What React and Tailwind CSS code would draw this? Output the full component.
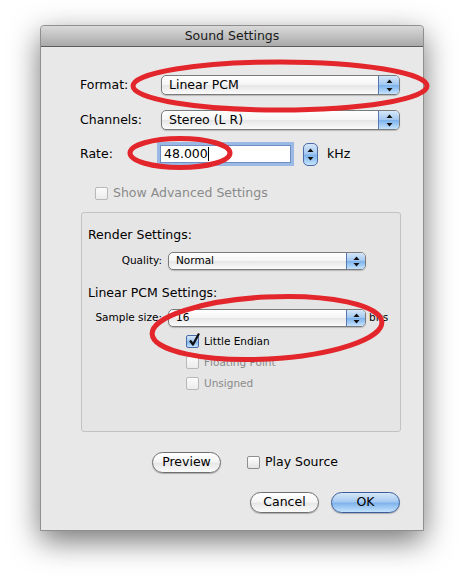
import React from 'react';

const font = { fontFamily: '"DejaVu Sans", "Liberation Sans", sans-serif' };

const aqua = 'bg-[linear-gradient(to_bottom,#d6e7f9,#a3c8f1_48%,#7db2ec_52%,#c4e3fd)]';
const gloss = 'bg-[linear-gradient(to_bottom,#ffffff,#f5f5f5_48%,#e6e6e6_52%,#fbfbfb)]';

const Arrows = ({ small }) => (
  <svg width="7" height={small ? 11 : 13} viewBox={small ? '0 0 7 11' : '0 0 7 13'}>
    <path d="M3.5 0.5 L6.5 4 L0.5 4 Z" fill="#111" />
    {small ? <path d="M3.5 10.5 L6.5 7 L0.5 7 Z" fill="#111" /> : <path d="M3.5 12.5 L6.5 9 L0.5 9 Z" fill="#111" />}
  </svg>
);

const Popup = ({ value, small }) => (
  <div
    className={`flex items-stretch rounded-[5px] border border-[#7b7b7b] overflow-hidden shadow-[0_1px_1px_rgba(0,0,0,0.2)] ${gloss} ${
      small ? 'h-[18px] text-[10.5px]' : 'h-[20px] text-[12.5px]'
    }`}
  >
    <span className="flex-1 flex items-center pl-[7px]">{value}</span>
    <div
      className={`flex items-center justify-center border-l border-[#5877b0] ${aqua} ${small ? 'w-[19px]' : 'w-[21px]'}`}
    >
      <Arrows small={small} />
    </div>
  </div>
);

const Check = ({ checked, disabled }) => (
  <div
    className={`relative w-[13px] h-[13px] rounded-[2px] border ${
      checked
        ? `border-[#4a6aa8] ${aqua}`
        : disabled
        ? 'border-[#b8b8b8] bg-[linear-gradient(to_bottom,#fbfbfb,#ececec)]'
        : 'border-[#8e8e8e] bg-[linear-gradient(to_bottom,#ffffff,#e3e3e3)]'
    }`}
  >
    {checked && (
      <svg className="absolute left-[1px] top-[-4px]" width="13" height="15" viewBox="0 0 13 15">
        <path d="M2 8.5 L5 12.5 L11 1.5" fill="none" stroke="#111" strokeWidth="2.2" strokeLinejoin="round" />
      </svg>
    )}
  </div>
);

const Button = ({ children, primary }) => (
  <div
    className={`w-[69px] h-[21px] rounded-full border flex items-center justify-center text-[12.5px] shadow-[0_1px_1px_rgba(0,0,0,0.25)] ${
      primary ? `border-[#3b5d9c] ${aqua}` : `border-[#6f6f6f] ${gloss}`
    }`}
  >
    {children}
  </div>
);

export default function App() {
  return (
    <div className="relative w-[464px] h-[586px] bg-white pt-[25px] pl-[40px] text-black" style={font}>
      <div className="w-[384px] h-[506px] bg-[#e8e8e8] border border-[#8f8f8f] rounded-t-[4px] shadow-[0_10px_30px_rgba(0,0,0,0.55)] flex flex-col">
        {/* title bar */}
        <div className="h-[21px] shrink-0 rounded-t-[4px] bg-[linear-gradient(to_bottom,#dadada,#a9a9a9)] border-b border-[#5c5c5c] flex items-center justify-center text-[12.5px] text-[#1a1a1a]">
          Sound Settings
        </div>

        <div className="flex flex-col pl-[39px] pr-[23px]">
          <div className="mt-[28px] flex items-center">
            <span className="w-[81px] text-[12.5px]">Format:</span>
            <div className="flex-1">
              <Popup value="Linear PCM" />
            </div>
          </div>

          <div className="mt-[15px] flex items-center">
            <span className="w-[81px] text-[12.5px]">Channels:</span>
            <div className="flex-1">
              <Popup value="Stereo (L R)" />
            </div>
          </div>

          <div className="mt-[12px] h-[24px] flex items-center">
            <span className="w-[81px] text-[12.5px]">Rate:</span>
            <div className="w-[131px] h-[18px] ml-[-1px] bg-white border border-[#6f8fc4] shadow-[0_0_0_3px_rgba(112,160,226,0.65)] flex items-center pl-[3px] text-[12.5px]">
              48.000<span className="w-[1px] h-[14px] bg-black" />
            </div>
            <div className={`ml-[12px] w-[15px] h-[23px] rounded-[5px] border border-[#4c6ba6] flex items-center justify-center ${aqua}`}>
              <Arrows />
            </div>
            <span className="ml-[9px] text-[12.5px]">kHz</span>
          </div>

          <div className="mt-[20px] h-[14px] ml-[15px] flex items-center gap-[5px] text-[12.5px] text-[#8a8a8a]">
            <Check disabled />
            <span>Show Advanced Settings</span>
          </div>

          {/* group box */}
          <div className="mt-[12px] ml-[1px] w-[320px] h-[220px] rounded-[3px] border border-[#c2c2c2] bg-[#e5e5e5] flex flex-col pl-[6px]">
            <div className="mt-[14px] h-[16px] flex items-center text-[12.5px]">Render Settings:</div>
            <div className="mt-[9px] flex items-center">
              <span className="w-[80px] pr-[6px] text-right text-[10.5px]">Quality:</span>
              <div className="w-[198px]">
                <Popup small value="Normal" />
              </div>
            </div>
            <div className="mt-[15px] h-[16px] flex items-center text-[12.5px]">Linear PCM Settings:</div>
            <div className="mt-[8px] flex items-center">
              <span className="w-[80px] pr-[6px] text-right text-[10.5px]">Sample size:</span>
              <div className="w-[198px]">
                <Popup small value="16" />
              </div>
              <span className="ml-[3px] text-[10.5px]">bits</span>
            </div>
            <div className="ml-[98px] mt-[8px] flex flex-col gap-[8px] text-[10.5px]">
              <div className="h-[13px] flex items-center gap-[5px]">
                <Check checked />
                <span>Little Endian</span>
              </div>
              <div className="h-[13px] flex items-center gap-[5px] text-[#8a8a8a]">
                <Check disabled />
                <span>Floating Point</span>
              </div>
              <div className="h-[13px] flex items-center gap-[5px] text-[#8a8a8a]">
                <Check disabled />
                <span>Unsigned</span>
              </div>
            </div>
          </div>

          <div className="mt-[20px] h-[21px] flex items-center">
            <div className="ml-[72px]">
              <Button>Preview</Button>
            </div>
            <div className="ml-[26px] flex items-center gap-[5px] text-[12.5px]">
              <Check />
              <span>Play Source</span>
            </div>
          </div>

          <div className="mt-[19px] h-[21px] flex items-center justify-end gap-[12px]">
            <Button>Cancel</Button>
            <Button primary>OK</Button>
          </div>
        </div>
      </div>

      {/* red annotation ellipses */}
      <svg className="absolute inset-0 pointer-events-none" width="464" height="586">
        <g fill="none" stroke="#e3262b" strokeWidth="5">
          <ellipse cx="280" cy="86" rx="147" ry="24" />
          <ellipse cx="180" cy="153" rx="50" ry="14.5" />
          <ellipse cx="267" cy="328" rx="115" ry="31" transform="rotate(-3 267 328)" />
        </g>
      </svg>
    </div>
  );
}
